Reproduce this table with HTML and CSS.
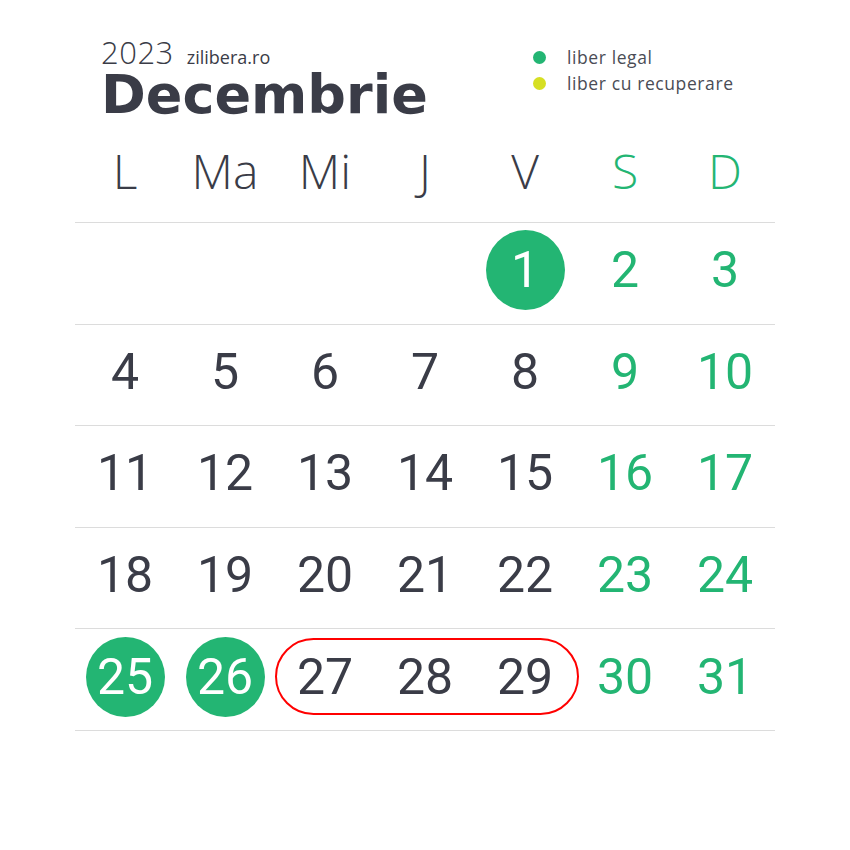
FILE: index.html
```html
<!DOCTYPE html>
<html>
<head>
<meta charset="utf-8">
<link rel="stylesheet" href="styles.css">
</head>
<body>
<div class="page">
  <div class="header">
    <div class="title">
      <div class="yearline"><span class="year">2023</span><span class="site">zilibera.ro</span></div>
      <div class="month">Decembrie</div>
    </div>
    <div class="legend">
      <div class="legend-item"><span class="dot dot-green"></span><span>liber legal</span></div>
      <div class="legend-item"><span class="dot dot-yellow"></span><span>liber cu recuperare</span></div>
    </div>
  </div>
  <div class="weekdays">
    <div>L</div><div>Ma</div><div>Mi</div><div>J</div><div>V</div><div class="we">S</div><div class="we">D</div>
  </div>
  <div class="week">
    <div class="day c5"><span class="circle">1</span></div>
    <div class="day we c6">2</div><div class="day we c7">3</div>
  </div>
  <div class="week">
    <div class="day">4</div><div class="day">5</div><div class="day">6</div><div class="day">7</div><div class="day">8</div><div class="day we">9</div><div class="day we">10</div>
  </div>
  <div class="week">
    <div class="day">11</div><div class="day">12</div><div class="day">13</div><div class="day">14</div><div class="day">15</div><div class="day we">16</div><div class="day we">17</div>
  </div>
  <div class="week">
    <div class="day">18</div><div class="day">19</div><div class="day">20</div><div class="day">21</div><div class="day">22</div><div class="day we">23</div><div class="day we">24</div>
  </div>
  <div class="week last">
    <div class="day r1 c1"><span class="circle">25</span></div>
    <div class="day r1 c2"><span class="circle">26</span></div>
    <div class="pill"></div>
    <div class="day r1 c3">27</div><div class="day r1 c4">28</div><div class="day r1 c5">29</div>
    <div class="day we r1 c6">30</div><div class="day we r1 c7">31</div>
  </div>
</div>
</body>
</html>
```
FILE: styles.css
```css
html, body { margin: 0; padding: 0; background: #fff; }
body { font-family: Roboto, "Liberation Sans", sans-serif; color: #3a3c47; }
.page { width: 700px; padding: 36px 75px 0 75px; }

.header { display: flex; height: 102px; }
.title { margin-left: 26px; width: 431px; }
.yearline { display: flex; align-items: baseline; height: 32px; }
.year { font-family: "Open Sans", sans-serif; font-weight: 300; font-size: 31px; line-height: 32px; letter-spacing: 0.5px; color: #3a3c47; }
.site { font-family: "Open Sans", sans-serif; font-size: 18px; margin-left: 13px; color: #3a3c47; }
.month { font-family: "DejaVu Sans", sans-serif; font-weight: bold; font-size: 54px; line-height: 53px; letter-spacing: 0; color: #3a3c47; }

.legend { padding-top: 8px; }
.legend-item { display: flex; align-items: center; height: 26px; font-family: "Open Sans", sans-serif; font-size: 17.5px; letter-spacing: 0.6px; color: #4a4c55; }
.dot { width: 13px; height: 13px; border-radius: 50%; margin-left: 1px; margin-right: 21px; }
.dot-green { background: #23b573; }
.dot-yellow { background: #d6df23; }

.weekdays { display: grid; grid-template-columns: repeat(7, 100px); height: 84px; box-sizing: border-box; padding-bottom: 22px; align-items: center; font-family: "Open Sans", sans-serif; font-weight: 300; font-size: 48px; text-align: center; color: #3a3c47; }
.weekdays .we { color: #23b573; }

.week { display: grid; grid-template-columns: repeat(7, 100px); height: 101.6px; box-sizing: border-box; border-top: 1px solid #dcdcdc; padding-bottom: 6px; align-items: center; font-size: 50px; }
.week.last { border-bottom: 1px solid #dcdcdc; height: 102.6px; }
.day { display: flex; justify-content: center; align-items: center; line-height: 1; }
.day.we { color: #23b573; }
.r1 { grid-row: 1; }
.c1 { grid-column: 1; } .c2 { grid-column: 2; } .c3 { grid-column: 3; } .c4 { grid-column: 4; } .c5 { grid-column: 5; } .c6 { grid-column: 6; } .c7 { grid-column: 7; }
.circle { width: 79px; height: 80px; border-radius: 50%; background: #23b573; color: #fff; display: flex; justify-content: center; align-items: center; }
.pill { grid-row: 1; grid-column: 3 / 6; height: 77px; box-sizing: border-box; border: 2px solid #f00; border-radius: 39px; margin-right: -4px; }
```
